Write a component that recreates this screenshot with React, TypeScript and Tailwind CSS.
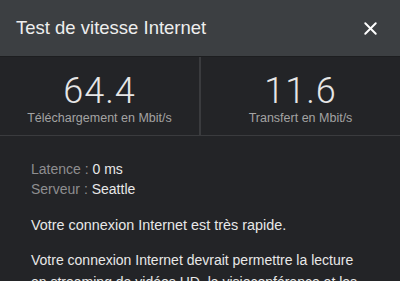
import { X } from "lucide-react";

export default function App() {
    return (
        <div className="h-[281px] w-[400px] overflow-hidden bg-[#232427] font-['Liberation_Sans',Arial,sans-serif]">
            <div className="flex h-[56px] items-center justify-between bg-[#3c3f42] pl-4 pr-[19px]">
                <h1 className="text-[18.5px] text-[#eeeeee]">Test de vitesse Internet</h1>
                <X className="h-[21px] w-[21px] text-white" strokeWidth={2.2} />
            </div>
            <div className="h-px bg-[#1d1e20]" />
            <div className="flex h-[79px] border-b border-[#3a3b3e]">
                <div className="flex flex-1 flex-col items-center pt-[16px]">
                    <span className="font-['Roboto',sans-serif] text-[36px] font-light leading-none tracking-[1px] text-[#e6e6e6]">64.4</span>
                    <span className="mt-[3px] text-[12.5px] leading-none text-[#a3a3a3]">Téléchargement en Mbit/s</span>
                </div>
                <div className="w-[2px] bg-[#3a3b3e]" />
                <div className="flex flex-1 flex-col items-center pt-[16px]">
                    <span className="font-['Roboto',sans-serif] text-[36px] font-light leading-none tracking-[1px] text-[#e6e6e6]">11.6</span>
                    <span className="mt-[3px] text-[12.5px] leading-none text-[#a3a3a3]">Transfert en Mbit/s</span>
                </div>
            </div>
            <div className="pl-[31px] pr-[28px] pt-[23px] text-[14px] text-[#e8e8e8]">
                <p className="leading-[20px]">
                    <span className="text-[#8e8e90]">Latence : </span>0 ms
                </p>
                <p className="leading-[20px]">
                    <span className="text-[#8e8e90]">Serveur : </span>Seattle
                </p>
                <p className="mt-[15px] text-[14.4px] leading-[22px]">Votre connexion Internet est très rapide.</p>
                <p className="mt-[13px] leading-[22px]">
                    Votre connexion Internet devrait permettre la lecture en streaming de vidéos HD, la visioconférence et les jeux en ligne.
                </p>
            </div>
        </div>
    );
}
